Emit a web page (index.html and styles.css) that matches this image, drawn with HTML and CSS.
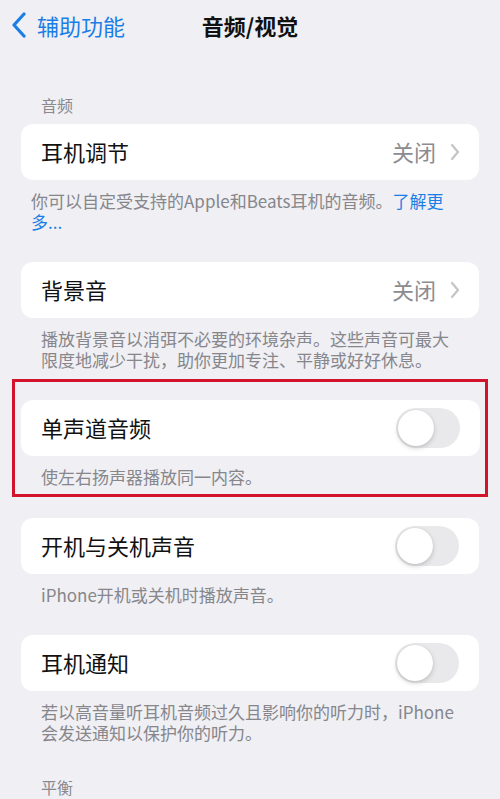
FILE: index.html
```html
<!DOCTYPE html>
<html lang="zh-CN">
<head>
<meta charset="utf-8">
<title>音频/视觉</title>
<link rel="stylesheet" href="styles.css">
</head>
<body>
<div class="page">
  <header class="nav">
    <div class="back">
      <svg class="back-icon" width="16" height="26" viewBox="0 0 16 26"><path d="M13 2 L3 13 L13 24" fill="none" stroke="#1a7ee6" stroke-width="3.2" stroke-linecap="round" stroke-linejoin="round"/></svg>
      <span class="back-text">辅助功能</span>
    </div>
    <div class="title">音频/视觉</div>
  </header>

  <div class="section-head first">音频</div>
  <div class="card">
    <span class="label">耳机调节</span>
    <span class="value">关闭<svg class="chev" width="10" height="18" viewBox="0 0 10 18"><path d="M2 2 L8 9 L2 16" fill="none" stroke="#c4c4c8" stroke-width="2.2" stroke-linecap="round" stroke-linejoin="round"/></svg></span>
  </div>
  <p class="foot foot-narrow">你可以自定受支持的Apple和Beats耳机的音频。<span class="link">了解更多...</span></p>

  <div class="card">
    <span class="label">背景音</span>
    <span class="value">关闭<svg class="chev" width="10" height="18" viewBox="0 0 10 18"><path d="M2 2 L8 9 L2 16" fill="none" stroke="#c4c4c8" stroke-width="2.2" stroke-linecap="round" stroke-linejoin="round"/></svg></span>
  </div>
  <p class="foot">播放背景音以消弭不必要的环境杂声。这些声音可最大限度地减少干扰，助你更加专注、平静或好好休息。</p>

  <div class="highlight">
    <div class="card">
      <span class="label">单声道音频</span>
      <span class="toggle"><span class="knob"></span></span>
    </div>
    <p class="foot">使左右扬声器播放同一内容。</p>
  </div>

  <div class="card">
    <span class="label">开机与关机声音</span>
    <span class="toggle"><span class="knob"></span></span>
  </div>
  <p class="foot">iPhone开机或关机时播放声音。</p>

  <div class="card">
    <span class="label">耳机通知</span>
    <span class="toggle"><span class="knob"></span></span>
  </div>
  <p class="foot">若以高音量听耳机音频过久且影响你的听力时，iPhone会发送通知以保护你的听力。</p>

  <div class="section-head last">平衡</div>
</div>
</body>
</html>
```

FILE: styles.css
```css
html, body {
  margin: 0;
  padding: 0;
}
body {
  background: #efeff4;
  font-family: "Noto Sans CJK SC", "Noto Sans", sans-serif;
  color: #111;
  width: 500px;
  height: 799px;
  overflow: hidden;
}
.page {
  display: flex;
  flex-direction: column;
}
.nav {
  height: 50px;
  display: flex;
  align-items: center;
  position: relative;
}
.back {
  display: flex;
  align-items: center;
  padding-left: 11px;
  gap: 10px;
  color: #1a7ee6;
  font-size: 22px;
  line-height: 26px;
}
.back-icon {
  display: block;
}
.title {
  position: absolute;
  left: 0;
  right: 0;
  top: 0;
  height: 50px;
  line-height: 50px;
  text-align: center;
  font-size: 22px;
  font-weight: 700;
  color: #111;
  pointer-events: none;
}
.section-head {
  font-size: 16px;
  line-height: 20px;
  color: #8a8a8e;
  padding-left: 41px;
}
.section-head.first {
  margin-top: 45px;
  margin-bottom: 9px;
}
.section-head.last {
  margin-top: 4px;
}
.card {
  margin: 0 21px;
  height: 56px;
  background: #fff;
  border-radius: 12px;
  display: flex;
  align-items: center;
  justify-content: space-between;
  padding: 0 20px;
  box-sizing: border-box;
}
.highlight .card {
  margin: 0 5px 0 6px;
}
.label {
  font-size: 22px;
  line-height: 28px;
  color: #111;
  margin-top: -3px;
}
.value {
  display: flex;
  align-items: center;
  gap: 14px;
  font-size: 22px;
  line-height: 28px;
  color: #8c8c90;
  margin-top: -3px;
  margin-right: -1px;
}
.chev {
  display: block;
  margin-top: 2px;
}
.foot {
  margin: 10px 0 30px;
  padding: 0 40px 0 41px;
  font-size: 17px;
  line-height: 21px;
  color: #86868b;
}
.foot-narrow {
  padding-left: 31px;
}
.link {
  color: #1a7ee6;
}
.highlight {
  margin: -21px 12px 21px;
  border: 3px solid #d3122c;
  padding: 18px 0 7px;
}
.highlight .foot {
  margin: 10px 0 0;
  padding-left: 26px;
}
.toggle {
  width: 64px;
  height: 40px;
  border-radius: 20px;
  background: #e9e9eb;
  display: flex;
  align-items: center;
  padding: 0 2px;
  box-sizing: border-box;
}
.knob {
  width: 36px;
  height: 36px;
  border-radius: 50%;
  background: #fff;
  box-shadow: 0 2px 5px rgba(0,0,0,0.18), 0 0 1px rgba(0,0,0,0.12);
}
```
